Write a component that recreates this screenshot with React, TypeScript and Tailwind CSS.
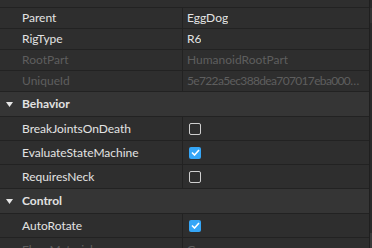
type Prop = {
    name: string
    value?: string
    check?: boolean
    disabled?: boolean
    tight?: boolean
}

const behavior: Prop[] = [
    { name: "BreakJointsOnDeath", check: false },
    { name: "EvaluateStateMachine", check: true },
    { name: "RequiresNeck", check: false },
]

function CheckBox({ on }: { on: boolean }) {
    if (on) {
        return (
            <div className="w-[12px] h-[12px] rounded-[2px] bg-[#35a6f7] flex items-center justify-center">
                <svg width="9" height="7" viewBox="0 0 9 7">
                    <path d="M1 3.5 L3.5 6 L8 1" stroke="white" strokeWidth="1.6" fill="none" />
                </svg>
            </div>
        )
    }
    return <div className="w-[12px] h-[12px] rounded-[2px] border border-[#cfcfcf]" />
}

function Row({ p, h }: { p: Prop; h: string }) {
    const txt = p.disabled ? "text-[#5e5e5e]" : "text-[#e3e3e3]"
    return (
        <div className={`flex ${h} border-b border-[#222222] bg-[#2e2e2e] shrink-0`}>
            <div className={`w-[183px] shrink-0 border-r border-[#222222] pl-[22px] flex items-center ${txt}`}>
                {p.name}
            </div>
            <div className={`flex-1 min-w-0 pl-[4px] pr-[5px] flex items-center ${txt}`}>
                {p.check === undefined ? (
                    <span className={`block min-w-0 truncate ${p.tight ? "tracking-[-0.65px]" : ""}`}>{p.value}</span>
                ) : (
                    <div className="pl-[2px]">
                        <CheckBox on={p.check} />
                    </div>
                )}
            </div>
        </div>
    )
}

function Header({ title }: { title: string }) {
    return (
        <div className="flex items-center h-[25px] border-b border-[#222222] bg-[#353535] shrink-0">
            <div className="w-[22px] flex justify-center pr-[3px]">
                <svg width="7" height="5" viewBox="0 0 7 5">
                    <path d="M0 0 H7 L3.5 5 Z" fill="#e6e6e6" />
                </svg>
            </div>
            <span className="font-bold text-[#e2e2e2]">{title}</span>
        </div>
    )
}

export default function App() {
    return (
        <div
            className="w-[372px] h-[248px] overflow-hidden bg-[#2e2e2e] flex text-[12px]"
            style={{ fontFamily: "Lato, 'Noto Sans', sans-serif" }}
        >
            <div className="flex-1 min-w-0 flex flex-col">
                <div className="h-[8px] border-b border-[#222222] shrink-0" />
                <Row h="h-[21px]" p={{ name: "Parent", value: "EggDog" }} />
                <Row h="h-[21px]" p={{ name: "RigType", value: "R6" }} />
                <Row h="h-[21px]" p={{ name: "RootPart", value: "HumanoidRootPart", disabled: true }} />
                <Row h="h-[21px]" p={{ name: "UniqueId", value: "5e722a5ec388dea707017eba000c94f1a2", disabled: true, tight: true }} />
                <Header title="Behavior" />
                {behavior.map((p) => (
                    <Row key={p.name} h="h-[24px]" p={p} />
                ))}
                <Header title="Control" />
                <Row h="h-[24px]" p={{ name: "AutoRotate", check: true }} />
                <Row h="h-[24px]" p={{ name: "FloorMaterial", value: "Grass", disabled: true }} />
            </div>
            <div className="w-[3px] shrink-0 border-l border-[#1f1f1f] bg-[#2a2a2a] flex flex-col">
                <div className="h-[8px]" />
                <div className="h-[15px] bg-[#333333]" />
                <div className="flex-1" />
                <div className="h-[15px] bg-[#3a3a3a]" />
            </div>
        </div>
    )
}
